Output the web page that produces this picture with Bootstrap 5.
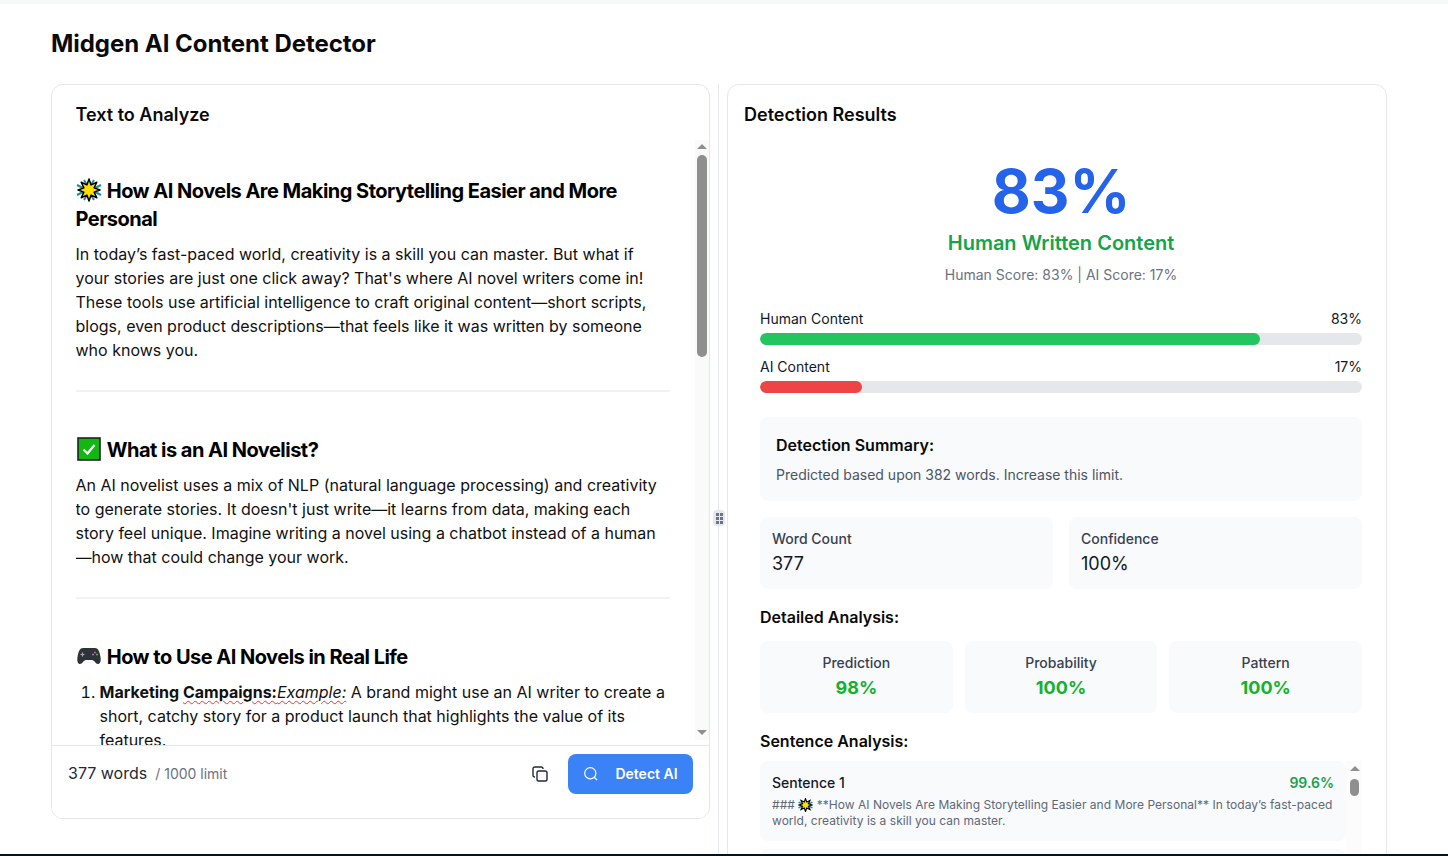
<!DOCTYPE html>
<html lang="en">
<head>
<meta charset="UTF-8" />
<meta name="viewport" content="width=device-width, initial-scale=1.0" />
<title>Midgen AI Content Detector</title>
<link href="https://cdn.jsdelivr.net/npm/bootstrap@5.3.0/dist/css/bootstrap.min.css" rel="stylesheet" />
<style>
  html, body { height: 100%; overflow: hidden; }
  body { font-family: Inter, "Liberation Sans", sans-serif; color: #0a0a0a; background: #fff; font-size: 16px; }
  .top-strip { height: 4px; background: #f7f8f8; }
  .bottom-strip { position: fixed; left: 0; right: 0; bottom: 0; height: 2px; background: #06141a; z-index: 5; }
  .page-wrap { padding: 0 61px 0 51px; }
  .page-title { font-size: 24px; font-weight: 700; line-height: 32px; margin: 0; padding: 24px 0 24px; letter-spacing: -.04px; }
  .split { gap: 0; height: 772px; }
  .panel { border: 1px solid #e5e7eb; border-radius: 12px; background: #fff; position: relative; overflow: hidden; }
  .panel-left { width: 659px; height: 735px; flex: none; }
  .panel-right { width: 660px; height: 800px; flex: none; }
  .splitter { width: 17px; flex: none; position: relative; align-self: stretch; }
  .splitter::before { content: ""; position: absolute; left: 8px; top: 0; bottom: 0; width: 1px; background: #e2e8f0; }
  .handle { position: absolute; left: 3px; top: 426px; width: 12px; height: 16px; background: #e5e9ef; border-radius: 4px; display: grid; grid-template-columns: 3px 3px; gap: 1px 1px; padding: 3px 2.5px; align-content: start; }
  .handle i { display: block; width: 3px; height: 3px; background: #6b7280; }
  .panel-head { font-size: 18px; font-weight: 600; line-height: 28px; }
  .left-head { padding: 16px 23.5px 0; }
  .right-head { padding: 16px 16px 0; }
  .doc-view { position: absolute; top: 60px; left: 23.5px; width: 594.5px; height: 600px; overflow: hidden; font-size: 16px; line-height: 24px; color: #111; }
  .doc-view h3 { font-size: 20px; line-height: 28px; font-weight: 700; letter-spacing: -.52px; margin: 0 0 9px; color: #000; }
  .doc-view h3 svg { vertical-align: -4px; margin-right: 1px; }
  .doc-view p { margin: 0; }
  .doc-view hr { margin: 28px 0 44px; border: 0; border-top: 2px solid #f0f2f5; opacity: 1; }
  .doc-view ol { margin: 9px 0 0; padding-left: 24px; }
  .doc-view strong { font-weight: 700; }
  .squiggle { text-decoration: underline wavy #e33; text-decoration-thickness: 1px; text-underline-offset: 2px; }
  .fake-scroll { position: absolute; top: 55px; left: 643px; width: 14px; height: 600px; background: #fafafa; }
  .arrow-up { position: absolute; left: 2px; top: 4px; width: 0; height: 0; border-left: 5px solid transparent; border-right: 5px solid transparent; border-bottom: 5px solid #8f8f8f; }
  .arrow-down { position: absolute; left: 2px; bottom: 5px; width: 0; height: 0; border-left: 5px solid transparent; border-right: 5px solid transparent; border-top: 5px solid #8f8f8f; }
  .thumb { position: absolute; left: 2px; top: 15px; width: 10px; height: 202px; border-radius: 5px; background: #8f8f8f; }
  .panel-foot { position: absolute; left: 0; right: 0; top: 660px; height: 74px; border-top: 1px solid #e5e7eb; padding: 8px 16px 0; background: #fff; }
  .count-row { padding-top: 7px; }
  .count { font-size: 16px; color: #1f2937; }
  .limit { font-size: 14px; color: #6b7280; margin-left: 8px; }
  .detect-btn { width: 125px; height: 40px; padding: 0 0 1px; background: #3b82f6; border: 0; border-radius: 8px; color: #fff; font-size: 14px; font-weight: 600; }
  .detect-btn:hover { background: #3b82f6; color: #fff; }
  .icon-plain { background: none; border: 0; padding: 0; margin-right: 20px; line-height: 0; }
  .score-big { font-size: 60px; line-height: 60px; font-weight: 700; color: #2563eb; margin-top: 32px; }
  .verdict { font-size: 20px; line-height: 28px; font-weight: 600; color: #16a34a; margin-top: 8px; }
  .score-line { font-size: 14px; line-height: 20px; color: #6b7280; margin-top: 8px; }
  .result-body { padding: 0 24px 0 32px; }
  .meter-label { font-size: 14px; line-height: 20px; color: #111827; }
  .meter { height: 12px; border-radius: 6px; background: #e5e7eb; overflow: hidden; margin: 4px 0 12px; }
  .meter-fill { height: 100%; border-radius: 6px; }
  .soft-box { background: #f9fafb; border-radius: 8px; }
  .summary { padding: 16px; height: 84px; margin-top: 24px; }
  .summary h4 { font-size: 16px; line-height: 24px; font-weight: 600; margin: 0; }
  .summary p { font-size: 14px; line-height: 20px; color: #4b5563; margin: 8px 0 0; }
  .stat { padding: 12px; height: 72px; flex: 1 1 0; }
  .stat-label { font-size: 14px; line-height: 20px; font-weight: 500; color: #374151; }
  .stat-value { font-size: 18px; line-height: 28px; color: #111827; margin-top: 1px; }
  .section-title { font-size: 16px; line-height: 24px; font-weight: 600; margin: 16px 0 12px; }
  .section-tight { margin-bottom: 8px; }
  .metric-value { font-size: 18px; line-height: 28px; font-weight: 700; color: #12b12e; margin-top: 1px; }
  .sentence-wrap { position: relative; height: 100px; }
  .sentence { width: 586px; height: 80px; padding: 12px; margin-bottom: 8px; }
  .sentence-title { font-size: 14px; line-height: 20px; font-weight: 500; color: #111827; }
  .sentence-pct { font-size: 14px; line-height: 20px; font-weight: 600; color: #16a34a; }
  .sentence-text { font-size: 12px; line-height: 16px; color: #5f6878; margin-top: 4px; letter-spacing: .03px; }
  .sentence-text svg { vertical-align: -3px; }
  .mini-scroll { position: absolute; left: 586px; top: 0; width: 16px; height: 100px; background: #fcfcfc; }
  .mini-scroll .arrow-up { left: 4px; top: 5px; }
  .mini-scroll .thumb { left: 4px; top: 18px; width: 9px; height: 17px; }
</style>
</head>
<body>
  <div class="top-strip"></div>
  <div class="page-wrap">
    <h1 class="page-title">Midgen AI Content Detector</h1>
    <div class="split d-flex align-items-start">
      <section class="panel panel-left">
        <div class="panel-head left-head">Text to Analyze</div>
        <div class="doc-view">
          <div class="pt-3 mt-3">
            <h3><svg width="26" height="24" viewBox="0 0 26 24"><path d="M1 7l6 3M25 7l-6 3M1 17l6-3M25 17l-6-3M8 2l3 5M18 2l-3 5M8 22l3-5M18 22l-3-5" stroke="#1a8fa0" stroke-width="2"/><polygon points="13,1 15.100,6.900 20.800,4.200 18.100,9.900 24,12 18.100,14.100 20.800,19.800 15.100,17.100 13,23 10.900,17.100 5.200,19.800 7.900,14.100 2,12 7.900,9.900 5.200,4.200 10.900,6.900" fill="#ffdf00" stroke="#000" stroke-width="1.500" stroke-linejoin="round"/></svg> How AI Novels Are Making Storytelling Easier and More Personal</h3>
            <p>In today’s fast-paced world, creativity is a skill you can master. But what if your stories are just one click away? That's where AI novel writers come in! These tools use artificial intelligence to craft original content—short scripts, blogs, even product descriptions—that feels like it was written by someone who knows you.</p>
          </div>
          <hr />
          <h3><svg width="26" height="24" viewBox="0 0 26 24"><rect x="2" y="1" width="22" height="22" fill="#12b812" stroke="#222" stroke-width="1.600"/><path d="M7.500 12.500l4 4 7-8.500" fill="none" stroke="#fff" stroke-width="2.200"/></svg> What is an AI Novelist?</h3>
          <p>An AI novelist uses a mix of NLP (natural language processing) and creativity to generate stories. It doesn't just write—it learns from data, making each story feel unique. Imagine writing a novel using a chatbot instead of a human —how that could change your work.</p>
          <hr />
          <h3><svg width="26" height="24" viewBox="0 0 26 24"><path d="M7 4h12c3 0 4.500 3 5.500 9 .7 4.500-.5 7-2.500 7-2.500 0-3.500-4-6-4h-6c-2.500 0-3.500 4-6 4-2 0-3.200-2.500-2.500-7C2.500 7 4 4 7 4z" fill="#2e3338"/><path d="M6.500 8.500v4M4.500 10.500h4" stroke="#aab" stroke-width="1.200"/><circle cx="19" cy="8.500" r="1" fill="#e55"/><circle cx="21" cy="10.500" r="1" fill="#5b5"/><circle cx="17" cy="10.500" r="1" fill="#59e"/></svg> How to Use AI Novels in Real Life</h3>
          <ol>
            <li><strong>Marketing <span class="squiggle">Campaigns:</span></strong><em class="squiggle">Example:</em> A brand might use an AI writer to create a short, catchy story for a product launch that highlights the value of its features.</li>
          </ol>
        </div>
        <div class="fake-scroll"><span class="arrow-up"></span><span class="thumb"></span><span class="arrow-down"></span></div>
        <div class="panel-foot d-flex justify-content-between align-items-start">
          <div class="d-flex align-items-baseline count-row"><span class="count">377 words</span><span class="limit">/ 1000 limit</span></div>
          <div class="d-flex align-items-center">
            <button class="icon-plain" type="button" aria-label="Copy"><svg width="16" height="16" viewBox="0 0 16 16" fill="none" stroke="#1f2937" stroke-width="1.400"><rect x="5" y="5" width="10" height="10" rx="1.800"/><path d="M3 11h-.2A1.800 1.800 0 0 1 1 9.200V2.800A1.800 1.800 0 0 1 2.800 1h6.400A1.800 1.800 0 0 1 11 2.800V3"/></svg></button>
            <button class="btn detect-btn d-flex align-items-center justify-content-center gap-3" type="button"><svg width="16" height="16" viewBox="0 0 16 16" fill="none" stroke="#fff" stroke-width="1.200"><circle cx="7.300" cy="7.300" r="5.600"/><path d="M11.500 11.500L14 14"/></svg><span>Detect AI</span></button>
          </div>
        </div>
      </section>
      <div class="splitter"><div class="handle"><i></i><i></i><i></i><i></i><i></i><i></i></div></div>
      <section class="panel panel-right">
        <div class="panel-head right-head">Detection Results</div>
        <div class="result-body">
          <div class="text-center">
            <div class="score-big">83%</div>
            <div class="verdict">Human Written Content</div>
            <div class="score-line">Human Score: 83% | AI Score: 17%</div>
          </div>
          <div class="mt-4">
            <div class="d-flex justify-content-between meter-label"><span>Human Content</span><span>83%</span></div>
            <div class="meter"><div class="meter-fill" style="width: 83%; background: #22c55e"></div></div>
            <div class="d-flex justify-content-between meter-label"><span>AI Content</span><span>17%</span></div>
            <div class="meter"><div class="meter-fill" style="width: 17%; background: #ef4444"></div></div>
          </div>
          <div class="soft-box summary">
            <h4>Detection Summary:</h4>
            <p>Predicted based upon 382 words. Increase this limit.</p>
          </div>
          <div class="d-flex mt-3" style="gap: 16px">
            <div class="soft-box stat"><div class="stat-label">Word Count</div><div class="stat-value">377</div></div>
            <div class="soft-box stat"><div class="stat-label">Confidence</div><div class="stat-value">100%</div></div>
          </div>
          <div class="section-title">Detailed Analysis:</div>
          <div class="d-flex" style="gap: 12px">
            <div class="soft-box stat text-center"><div class="stat-label">Prediction</div><div class="metric-value">98%</div></div>
            <div class="soft-box stat text-center"><div class="stat-label">Probability</div><div class="metric-value">100%</div></div>
            <div class="soft-box stat text-center"><div class="stat-label">Pattern</div><div class="metric-value">100%</div></div>
          </div>
          <div class="section-title section-tight">Sentence Analysis:</div>
          <div class="sentence-wrap">
            <div class="soft-box sentence">
              <div class="d-flex justify-content-between"><span class="sentence-title">Sentence 1</span><span class="sentence-pct">99.6%</span></div>
              <div class="sentence-text">### <svg width="15" height="14" viewBox="0 0 26 24"><path d="M1 7l6 3M25 7l-6 3M1 17l6-3M25 17l-6-3" stroke="#1a8fa0" stroke-width="2.500"/><polygon points="13,1 15.100,6.900 20.800,4.200 18.100,9.900 24,12 18.100,14.100 20.800,19.800 15.100,17.100 13,23 10.900,17.100 5.200,19.800 7.900,14.100 2,12 7.900,9.900 5.200,4.200 10.900,6.900" fill="#ffdf00" stroke="#000" stroke-width="2"/></svg> **How AI Novels Are Making Storytelling Easier and More Personal** In today’s fast-paced world, creativity is a skill you can master.</div>
            </div>
            <div class="soft-box sentence"></div>
            <div class="mini-scroll"><span class="arrow-up"></span><span class="thumb"></span></div>
          </div>
        </div>
      </section>
    </div>
  </div>
  <div class="bottom-strip"></div>
  <script src="https://cdn.jsdelivr.net/npm/bootstrap@5.3.0/dist/js/bootstrap.bundle.min.js"></script>
</body>
</html>
